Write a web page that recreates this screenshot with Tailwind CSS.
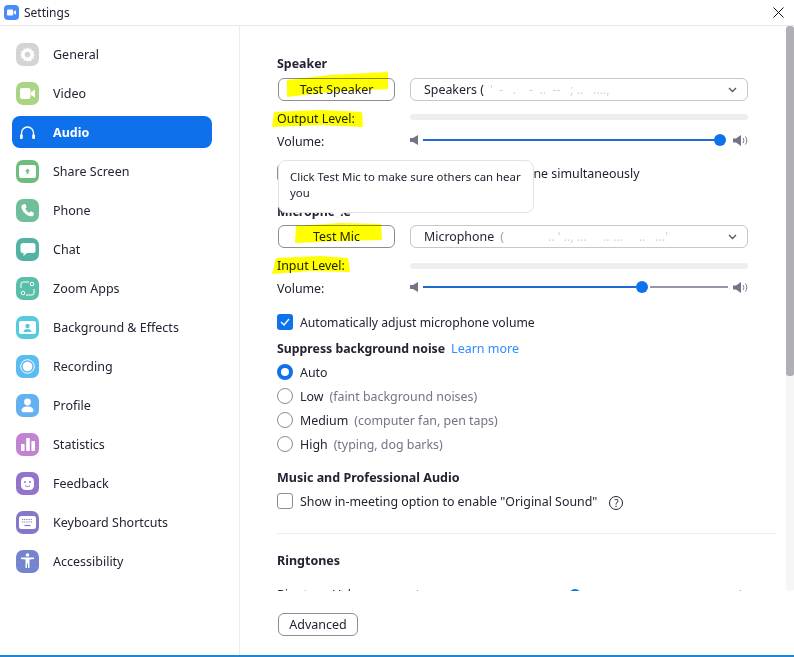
<!DOCTYPE html>
<html lang="en">
<head>
<meta charset="UTF-8">
<title>Settings</title>
<script src="https://cdn.jsdelivr.net/npm/@tailwindcss/browser@4"></script>
</head>
<body class="bg-white">
<div class="relative flex h-[657px] w-[794px] flex-col overflow-hidden border-b-2 border-[#1b87d6] bg-white font-['Noto_Sans',sans-serif] text-[12.5px] text-[#232333]">

  <!-- title bar -->
  <div class="flex h-[26px] shrink-0 items-center border-b border-[#e8e8ec] pl-1 pr-[10px]">
    <svg class="h-[15px] w-[15px]" viewBox="0 0 15 15"><rect width="15" height="15" rx="4" fill="#4a8cf7"/><rect x="3" y="4.5" width="6.2" height="6" rx="1.2" fill="#fff"/><path d="M9.8 6.8 12 5.2v4.6L9.8 8.2z" fill="#fff"/></svg>
    <span class="ml-[5px] text-[12px]">Settings</span>
    <svg class="ml-auto h-[11px] w-[11px]" viewBox="0 0 11 11"><path d="M.5.5l10 10M10.5.5l-10 10" stroke="#111" stroke-width="1" fill="none"/></svg>
  </div>

  <div class="flex min-h-0 flex-1">
    <!-- sidebar -->
    <div class="flex w-[240px] shrink-0 flex-col border-r border-[#ececf0] pl-3 pt-[11px]">
      <div class="flex h-[34px] items-center mb-[5px]">
        <span class="ml-1 flex h-[23px] w-[23px] items-center justify-center rounded-[7px] bg-[#d4d4d4]">
          <svg class="h-[17px] w-[17px]" viewBox="0 0 15 15"><path d="M7.5 1l1.2 1.7 2-.5.5 2 2 .6-.6 2 1.4 .7-1.4 1.5.6 1.9-2 .6-.5 2-2-.5L7.5 14l-1.2-1.5-2 .5-.5-2-2-.6.6-1.900L1 7.500l1.400-.7-.6-2 2-.6.5-2 2 .5z" fill="#fff"/><circle cx="7.5" cy="7.5" r="2.5" fill="#d4d4d4"/></svg>
        </span>
        <span class="ml-[14px] pt-0.5">General</span>
      </div>
      <div class="flex h-[34px] items-center mb-[5px]">
        <span class="ml-1 flex h-[23px] w-[23px] items-center justify-center rounded-[7px] bg-[#a9d585]">
          <svg class="h-[15px] w-[17px]" viewBox="0 0 17 15"><rect x="1" y="2" width="10.5" height="11" rx="2" fill="#fff"/><path d="M12 6l4-2.6v8.2L12 9z" fill="#fff"/></svg>
        </span>
        <span class="ml-[14px] pt-0.5">Video</span>
      </div>
      <div class="flex h-8 w-[200px] items-center rounded-lg bg-[#0e71eb] mb-[6px] mt-[1px] text-white">
        <span class="ml-1 flex h-[23px] w-[23px] items-center justify-center">
          <svg class="h-[15px] w-[17px]" viewBox="0 0 17 15"><path d="M2.500 11V8a6 6 0 0 1 12 0v3" stroke="#fff" stroke-width="1.400" fill="none"/><rect x="1" y="9.500" width="2.800" height="4.500" rx="1" fill="#fff"/><rect x="13.200" y="9.500" width="2.800" height="4.500" rx="1" fill="#fff"/></svg>
        </span>
        <span class="ml-[14px] pt-0.5 font-bold">Audio</span>
      </div>
      <div class="flex h-[34px] items-center mb-[5px]">
        <span class="ml-1 flex h-[23px] w-[23px] items-center justify-center rounded-[7px] bg-[#6fbd7c]">
          <svg class="h-[13px] w-[17px]" viewBox="0 0 17 13"><rect width="17" height="13" rx="2" fill="#fff"/><path d="M8.500 3.500 11 6.500H9.400V9H7.600V6.500H6z" fill="#6fbd7c"/></svg>
        </span>
        <span class="ml-[14px] pt-0.5">Share Screen</span>
      </div>
      <div class="flex h-[34px] items-center mb-[5px]">
        <span class="ml-1 flex h-[23px] w-[23px] items-center justify-center rounded-[7px] bg-[#6fbf9b]">
          <svg class="h-[15px] w-[15px]" viewBox="0 0 15 15"><path d="M3.600 1.200 5.400 1l1.300 3.200-1.400 1.300c.6 1.700 2.200 3.500 4 4.200l1.400-1.400 3.200 1.400-.3 2c-.2 1-1.200 1.800-2.400 1.600C6 12.500 2.200 8.500 1.400 4.200 1.200 2.800 2.300 1.500 3.600 1.200z" fill="#fff"/></svg>
        </span>
        <span class="ml-[14px] pt-0.5">Phone</span>
      </div>
      <div class="flex h-[34px] items-center mb-[5px]">
        <span class="ml-1 flex h-[23px] w-[23px] items-center justify-center rounded-[7px] bg-[#53b3a3]">
          <svg class="h-[15px] w-[16px]" viewBox="0 0 16 15"><path d="M3 1h10a2.500 2.500 0 0 1 2.500 2.500v5A2.500 2.500 0 0 1 13 11H7l-3.500 3v-3H3A2.500 2.500 0 0 1 .5 8.500v-5A2.500 2.500 0 0 1 3 1z" fill="#fff"/></svg>
        </span>
        <span class="ml-[14px] pt-0.5">Chat</span>
      </div>
      <div class="flex h-[34px] items-center mb-[5px]">
        <span class="ml-1 flex h-[23px] w-[23px] items-center justify-center rounded-[7px] bg-[#5abfa8]">
          <svg class="h-[15px] w-[15px]" viewBox="0 0 15 15" fill="none" stroke="#fff" stroke-width="1"><path d="M1 7V3a2 2 0 0 1 2-2h6M14 8v4a2 2 0 0 1-2 2H6"/><circle cx="12" cy="3" r="1.800"/><circle cx="3" cy="12" r="1.800"/></svg>
        </span>
        <span class="ml-[14px] pt-0.5">Zoom Apps</span>
      </div>
      <div class="flex h-[34px] items-center mb-[5px]">
        <span class="ml-1 flex h-[23px] w-[23px] items-center justify-center rounded-[7px] bg-[#57cadb]">
          <svg class="h-[13px] w-[17px]" viewBox="0 0 17 13"><rect width="17" height="13" rx="2" fill="#fff"/><circle cx="8.500" cy="5" r="2.200" fill="#57cadb"/><path d="M4.500 11c0-2 2-3 4-3s4 1 4 3z" fill="#57cadb"/></svg>
        </span>
        <span class="ml-[14px] pt-0.5">Background &amp; Effects</span>
      </div>
      <div class="flex h-[34px] items-center mb-[5px]">
        <span class="ml-1 flex h-[23px] w-[23px] items-center justify-center rounded-[7px] bg-[#5bbcef]">
          <svg class="h-[15px] w-[15px]" viewBox="0 0 15 15"><circle cx="7.500" cy="7.500" r="6.800" fill="none" stroke="#fff" stroke-width="1"/><circle cx="7.500" cy="7.500" r="4.800" fill="#fff"/></svg>
        </span>
        <span class="ml-[14px] pt-0.5">Recording</span>
      </div>
      <div class="flex h-[34px] items-center mb-[5px]">
        <span class="ml-1 flex h-[23px] w-[23px] items-center justify-center rounded-[7px] bg-[#63b0f3]">
          <svg class="h-[15px] w-[13px]" viewBox="0 0 13 15"><circle cx="6.500" cy="4" r="3.400" fill="#fff"/><path d="M.5 12.500c0-2.500 2.500-4 6-4s6 1.500 6 4c0 1-.8 1.800-2 1.800h-8c-1.200 0-2-.8-2-1.800z" fill="#fff"/></svg>
        </span>
        <span class="ml-[14px] pt-0.5">Profile</span>
      </div>
      <div class="flex h-[34px] items-center mb-[5px]">
        <span class="ml-1 flex h-[23px] w-[23px] items-center justify-center rounded-[7px] bg-[#c284d2]">
          <svg class="h-[14px] w-[14px]" viewBox="0 0 14 14" fill="#fff"><rect x="0" y="7" width="3.600" height="7" rx=".8"/><rect x="5.200" y="1" width="3.600" height="13" rx=".8"/><rect x="10.400" y="4" width="3.600" height="10" rx=".8"/></svg>
        </span>
        <span class="ml-[14px] pt-0.5">Statistics</span>
      </div>
      <div class="flex h-[34px] items-center mb-[5px]">
        <span class="ml-1 flex h-[23px] w-[23px] items-center justify-center rounded-[7px] bg-[#9374cb]">
          <svg class="h-[15px] w-[15px]" viewBox="0 0 15 15"><rect x="1" y="1" width="13" height="13" rx="4.500" fill="#fff"/><circle cx="5" cy="6" r="1" fill="#9374cb"/><circle cx="10" cy="6" r="1" fill="#9374cb"/><path d="M5 9.500c1.500 1.400 3.500 1.400 5 0" stroke="#9374cb" fill="none"/></svg>
        </span>
        <span class="ml-[14px] pt-0.5">Feedback</span>
      </div>
      <div class="flex h-[34px] items-center mb-[5px]">
        <span class="ml-1 flex h-[23px] w-[23px] items-center justify-center rounded-[7px] bg-[#8578c9]">
          <svg class="h-[13px] w-[17px]" viewBox="0 0 17 13"><rect width="17" height="13" rx="2.500" fill="#fff"/><path d="M3 3.500h11M3 6h11" stroke="#8578c9" stroke-width="1.200" stroke-dasharray="1.200 1"/><path d="M5.500 9.500h6" stroke="#8578c9" stroke-width="1.200"/></svg>
        </span>
        <span class="ml-[14px] pt-0.5">Keyboard Shortcuts</span>
      </div>
      <div class="flex h-[34px] items-center">
        <span class="ml-1 flex h-[23px] w-[23px] items-center justify-center rounded-[7px] bg-[#7484cf]">
          <svg class="h-[16px] w-[15px]" viewBox="0 0 15 16" fill="#fff"><circle cx="7.500" cy="2" r="1.800"/><path d="M1 4.500h13v1.400L9.500 6.500V15H8V10.500H7V15H5.500V6.500L1 5.900z"/></svg>
        </span>
        <span class="ml-[14px] pt-0.5">Accessibility</span>
      </div>
    </div>

    <!-- main -->
    <div class="flex min-w-0 flex-1 flex-col">
      <div class="relative h-[565px] shrink-0 overflow-hidden pl-[37px] text-[12.4px]">
        <!-- scrollbar -->
        <div class="absolute right-0 top-0 h-full w-2 rounded-[3px] bg-[#f6f6f7]">
          <div class="h-[350px] rounded-[3px] bg-[#b0afb6]"></div>
        </div>

        <div class="w-[499px] pt-[27px]">
          <div class="flex h-5 items-center pt-0.5 font-bold">Speaker</div>
          <div class="ml-px mt-[5px] flex h-[23px]">
            <button class="h-full w-[117px] rounded-md border border-[#8d8d94] pt-0.5 text-center">Test Speaker</button>
            <div class="ml-[15px] flex h-full w-[338px] items-center rounded-md border border-[#c6c6cb] pl-[13px] pr-[10px]">
              <span class="pt-0.5">Speakers (</span><span class="ml-[6px] pt-0.5 text-[#d4d4d8]">' &nbsp;- &nbsp; . &nbsp;&nbsp; - &nbsp;.. &nbsp;-- &nbsp; ; .. &nbsp; ....,</span>
              <svg class="ml-auto h-[6px] w-[9px]" viewBox="0 0 9 6"><path d="M1 1l3.500 3.500L8 1" stroke="#55555c" stroke-width="1.300" fill="none"/></svg>
            </div>
          </div>
          <div class="mt-[6px] flex h-5 items-center">
            <span class="w-[133px] pt-1">Output Level:</span>
            <div class="h-[6px] w-[338px] rounded-[3px] bg-[#eeeeee]"></div>
          </div>
          <div class="mt-[3px] flex h-5 items-center">
            <span class="w-[133px] pt-1">Volume:</span>
            <svg class="h-[10px] w-[8px]" viewBox="0 0 8 10"><path d="M0 3h3l5-3v10L3 7H0z" fill="#747487"/></svg>
            <div class="ml-[5px] h-0.5 w-[291px] bg-[#1c6ccc]"></div>
            <div class="h-3 w-3 rounded-full bg-[#0e72ed]"></div>
            <svg class="ml-[7px] h-[11px] w-[15px]" viewBox="0 0 15 11"><path d="M0 3.500h3L8 0v11L3 7.500H0z" fill="#747487"/><path d="M10 3c1 1.500 1 3.500 0 5M12.500 1.500c1.700 2.500 1.700 5.500 0 8" stroke="#747487" fill="none"/></svg>
          </div>
          <div class="mt-[13px] flex h-5 items-center">
            <span class="h-4 w-4 rounded-[3px] border border-[#8d8d94]"></span>
            <span class="ml-[7px] pt-0.5">Use separate audio device to play ringtone simultaneously</span>
          </div>

          <div class="mt-[18px] flex h-5 items-center pt-0.5 font-bold">Microphone</div>
          <div class="ml-px mt-1 flex h-[23px]">
            <button class="h-full w-[117px] rounded-md border border-[#8d8d94] pt-0.5 text-center">Test Mic</button>
            <div class="ml-[15px] flex h-full w-[338px] items-center rounded-md border border-[#c6c6cb] pl-[13px] pr-[10px]">
              <span class="pt-0.5">Microphone</span><span class="ml-[6px] pt-0.5 text-[#a5a5a9]">(</span><span class="ml-[44px] pt-0.5 text-[#d4d4d8]">.. ' .., ... &nbsp; &nbsp; .. ... &nbsp; &nbsp; .. &nbsp; ...'</span>
              <svg class="ml-auto h-[6px] w-[9px]" viewBox="0 0 9 6"><path d="M1 1l3.500 3.500L8 1" stroke="#55555c" stroke-width="1.300" fill="none"/></svg>
            </div>
          </div>
          <div class="mt-2 flex h-5 items-center">
            <span class="w-[133px]">Input Level:</span>
            <div class="h-[6px] w-[338px] rounded-[3px] bg-[#eeeeee]"></div>
          </div>
          <div class="mt-px flex h-5 items-center">
            <span class="w-[133px] pt-1">Volume:</span>
            <svg class="h-[10px] w-[8px]" viewBox="0 0 8 10"><path d="M0 3h3l5-3v10L3 7H0z" fill="#747487"/></svg>
            <div class="ml-[5px] h-0.5 w-[213px] bg-[#1c6ccc]"></div>
            <div class="h-3 w-3 rounded-full bg-[#0e72ed]"></div>
            <div class="ml-0.5 h-0.5 w-[78px] bg-[#9795a8]"></div>
            <svg class="ml-[5px] h-[11px] w-[15px]" viewBox="0 0 15 11"><path d="M0 3.500h3L8 0v11L3 7.500H0z" fill="#747487"/><path d="M10 3c1 1.500 1 3.500 0 5M12.500 1.500c1.700 2.500 1.700 5.500 0 8" stroke="#747487" fill="none"/></svg>
          </div>

          <div class="mt-[15px] flex h-5 items-center">
            <span class="flex h-4 w-4 items-center justify-center rounded-[3px] bg-[#0e72ed]">
              <svg class="h-2 w-[10px]" viewBox="0 0 10 8"><path d="M1 4l3 3 5-6" stroke="#fff" stroke-width="1.300" fill="none"/></svg>
            </span>
            <span class="ml-[7px] pt-0.5 text-[12.2px]">Automatically adjust microphone volume</span>
          </div>
          <div class="mt-[6px] flex h-5 items-center pt-0.5">
            <span class="text-[12.3px] font-bold">Suppress background noise</span>
            <span class="ml-[6px] text-[12.5px] text-[#2d8cff]">Learn more</span>
          </div>
          <div class="mt-1 flex h-5 items-center">
            <span class="h-4 w-4 rounded-full border-[4px] border-[#0e72ed]"></span>
            <span class="ml-[7px] pt-0.5">Auto</span>
          </div>
          <div class="mt-1 flex h-5 items-center">
            <span class="h-4 w-4 rounded-full border border-[#8d8d94]"></span>
            <span class="ml-[7px] pt-0.5">Low</span><span class="ml-[6px] pt-0.5 text-[#747487]">(faint background noises)</span>
          </div>
          <div class="mt-1 flex h-5 items-center">
            <span class="h-4 w-4 rounded-full border border-[#8d8d94]"></span>
            <span class="ml-[7px] pt-0.5">Medium</span><span class="ml-[6px] pt-0.5 text-[#747487]">(computer fan, pen taps)</span>
          </div>
          <div class="mt-1 flex h-5 items-center">
            <span class="h-4 w-4 rounded-full border border-[#8d8d94]"></span>
            <span class="ml-[7px] pt-0.5">High</span><span class="ml-[6px] pt-0.5 text-[#747487]">(typing, dog barks)</span>
          </div>

          <div class="mt-[13px] flex h-5 items-center pt-0.5 text-[12.5px] font-bold">Music and Professional Audio</div>
          <div class="mt-1 flex h-5 items-center">
            <span class="h-4 w-4 rounded-[3px] border border-[#8d8d94]"></span>
            <span class="ml-[7px] pt-0.5">Show in-meeting option to enable "Original Sound"</span>
            <span class="ml-[12px] mt-1 flex h-[14px] w-[14px] items-center justify-center rounded-full border border-[#232333] text-[10px] leading-none">?</span>
          </div>
          <div class="mt-[22px] h-px bg-[#ededf0]"></div>
          <div class="mt-4 flex h-5 items-center pt-0.5 text-[12.5px] font-bold">Ringtones</div>
          <div class="mt-[15px] flex h-5 w-[471px] items-center">
            <span class="w-[133px]">Ringtone Volume:</span>
            <svg class="h-[10px] w-[8px]" viewBox="0 0 8 10"><path d="M0 3h3l5-3v10L3 7H0z" fill="#747487"/></svg>
            <div class="ml-[5px] h-0.5 w-[146px] bg-[#1c6ccc]"></div>
            <div class="h-3 w-3 rounded-full bg-[#0e72ed]"></div>
            <svg class="ml-auto h-[11px] w-[15px]" viewBox="0 0 15 11"><path d="M0 3.500h3L8 0v11L3 7.500H0z" fill="#747487"/><path d="M10 3c1 1.500 1 3.500 0 5M12.500 1.500c1.700 2.500 1.700 5.500 0 8" stroke="#747487" fill="none"/></svg>
          </div>
        </div>

        <!-- tooltip -->
        <div class="absolute left-[38px] top-[134px] h-[53px] w-[256px] rounded-lg border border-[#e3e3e6] bg-white px-[11px] py-2 text-[11.4px] leading-4">
          Click Test Mic to make sure others can hear you
          <div class="absolute bottom-[-5px] left-[54px] h-[9px] w-[9px] rotate-45 rounded-[1px] border-b border-r border-[#e3e3e6] bg-white"></div>
        </div>
      </div>

      <div class="pl-[38px] pt-[22px]">
        <button class="h-[23px] w-[80px] rounded-md border border-[#8d8d94] pt-0.5 text-center">Advanced</button>
      </div>
    </div>
  </div>

  <!-- marker highlights -->
  <svg class="pointer-events-none absolute left-0 top-0 mix-blend-multiply" width="794" height="657" viewBox="0 0 794 657">
    <path d="M287 80 L330 75 L388 72 L388 89 L330 92 L287 97z" fill="#ffff00"/>
    <path d="M274 112 L320 110 L362 112 L363 127 L320 125 L272 127z" fill="#ffff00"/>
    <path d="M296 226 L340 223 L381 224 L382 240 L340 241 L295 243z" fill="#ffff00"/>
    <path d="M276 258 L320 256 L348 258 L350 272 L310 271 L272 274z" fill="#ffff00"/>
  </svg>
</div>
</body>
</html>
